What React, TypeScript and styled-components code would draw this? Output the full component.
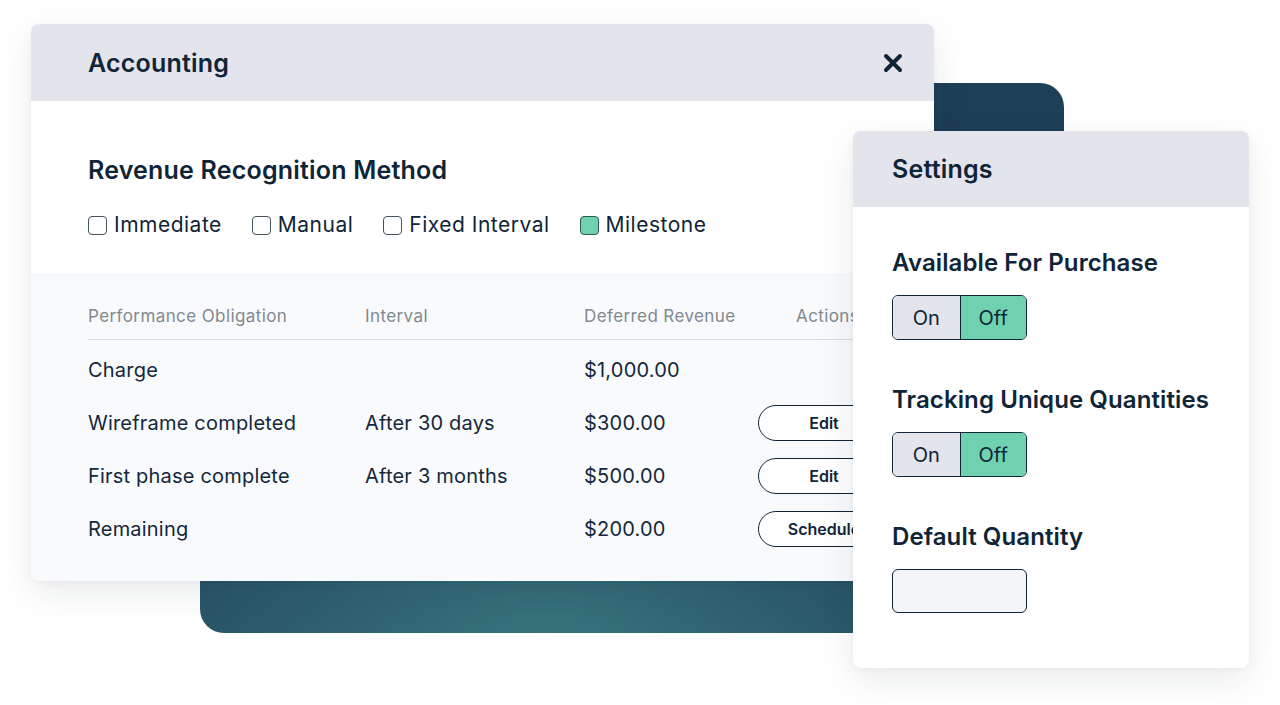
import React from 'react';
import styled, { createGlobalStyle } from 'styled-components';

const ink = '#0f2537';
const font = `Inter, "Noto Sans", "Liberation Sans", sans-serif`;

const GlobalStyle = createGlobalStyle`
  html, body {
    margin: 0;
    padding: 0;
    background: #ffffff;
  }
  body {
    font-family: ${font};
    color: ${ink};
  }
  * { box-sizing: border-box; }
`;

const Stage = styled.div`
  position: relative;
  width: 1280px;
  height: 705px;
  overflow: hidden;
  background: #fff;
`;

const Backdrop = styled.div`
  position: absolute;
  left: 200px;
  top: 83px;
  width: 864px;
  height: 550px;
  border-radius: 24px;
  background: radial-gradient(ellipse 70% 60% at 40% 100%, #38737c 0%, #2c5c6b 45%, #1e3f58 100%);
`;

const Card = styled.section<{ $left: number; $top: number; $width: number; $height: number }>`
  position: absolute;
  left: ${p => p.$left}px;
  top: ${p => p.$top}px;
  width: ${p => p.$width}px;
  height: ${p => p.$height}px;
  border-radius: 8px;
  overflow: hidden;
  background: #fff;
  box-shadow: 0 12px 36px rgba(20, 35, 50, 0.09), 0 2px 6px rgba(20, 35, 50, 0.04);
  display: flex;
  flex-direction: column;
`;

const CardHeader = styled.header<{ $height: number; $pad: number }>`
  flex: none;
  height: ${p => p.$height}px;
  padding: 0 30px 0 ${p => p.$pad}px;
  background: #e3e4ec;
  display: flex;
  align-items: center;
  justify-content: space-between;
`;

const CardTitle = styled.h1`
  margin: 0;
  font-size: 25px;
  font-weight: 600;
  letter-spacing: 0.2px;
  color: ${ink};
`;

const CloseButton = styled.button`
  border: 0;
  background: none;
  padding: 0;
  width: 22px;
  height: 22px;
  display: flex;
  color: ${ink};
`;

const MethodSection = styled.div`
  flex: none;
  height: 172px;
  padding: 54px 57px 0;
  display: flex;
  flex-direction: column;
  gap: 27px;
`;

const SectionTitle = styled.h2`
  margin: 0;
  font-size: 25px;
  line-height: 30px;
  font-weight: 600;
  letter-spacing: 0.2px;
  color: ${ink};
`;

const CheckRow = styled.div`
  display: flex;
  align-items: center;
  gap: 30px;
`;

const CheckOption = styled.label`
  display: flex;
  align-items: center;
  gap: 7px;
  font-size: 21px;
  line-height: 26px;
  letter-spacing: 0.5px;
  color: ${ink};
`;

const Box = styled.span<{ $checked?: boolean }>`
  width: 19px;
  height: 19px;
  border-radius: 4px;
  border: 1.5px solid ${p => (p.$checked ? '#2f5a55' : '#45535d')};
  background: ${p => (p.$checked ? '#6fd1b0' : '#fff')};
`;

const TableArea = styled.div`
  flex: 1;
  background: #f9fafc;
  padding: 30px 57px 0;
`;

const Grid = styled.div`
  display: grid;
  grid-template-columns: 277px 219px 174px 1fr;
  align-items: center;
`;

const HeadRow = styled(Grid)`
  height: 37px;
  padding-bottom: 11px;
  border-bottom: 1px solid #d6d9dd;
  margin-bottom: 3px;
`;

const HeadCell = styled.div<{ $indent?: number }>`
  padding-left: ${p => p.$indent ?? 0}px;
  font-size: 17px;
  line-height: 26px;
  letter-spacing: 0.4px;
  color: #80898f;
  white-space: nowrap;
`;

const BodyRow = styled(Grid)`
  height: 53px;
`;

const Cell = styled.div`
  font-size: 20px;
  letter-spacing: 0.2px;
  color: #13283a;
  white-space: nowrap;
`;

const PillButton = styled.button`
  width: 132px;
  height: 36px;
  border-radius: 18px;
  border: 1.5px solid ${ink};
  background: #fff;
  font-family: ${font};
  font-size: 16px;
  font-weight: 600;
  color: ${ink};
  padding: 0;
`;

const SettingsBody = styled.div`
  flex: 1;
  padding: 41px 39px 0;
  display: flex;
  flex-direction: column;
  gap: 45px;
`;

const Field = styled.div`
  display: flex;
  flex-direction: column;
  gap: 17px;
`;

const FieldLabel = styled.div`
  font-size: 24px;
  line-height: 30px;
  font-weight: 600;
  letter-spacing: 0.1px;
  color: ${ink};
`;

const Toggle = styled.div`
  width: 135px;
  height: 45px;
  border: 1.5px solid ${ink};
  border-radius: 6px;
  overflow: hidden;
  display: grid;
  grid-template-columns: 1fr 1fr;
`;

const ToggleHalf = styled.span<{ $active?: boolean }>`
  display: flex;
  align-items: center;
  justify-content: center;
  font-size: 20px;
  color: ${ink};
  background: ${p => (p.$active ? '#6fd1b0' : '#e3e4ec')};
  & + & {
    border-left: 1.5px solid ${ink};
  }
`;

const QtyInput = styled.div`
  width: 135px;
  height: 44px;
  border: 1.5px solid ${ink};
  border-radius: 6px;
  background: #f4f5f9;
`;

const methods = [
  { label: 'Immediate', checked: false },
  { label: 'Manual', checked: false },
  { label: 'Fixed Interval', checked: false },
  { label: 'Milestone', checked: true },
];

const rows = [
  { name: 'Charge', interval: '', amount: '$1,000.00', action: '' },
  { name: 'Wireframe completed', interval: 'After 30 days', amount: '$300.00', action: 'Edit' },
  { name: 'First phase complete', interval: 'After 3 months', amount: '$500.00', action: 'Edit' },
  { name: 'Remaining', interval: '', amount: '$200.00', action: 'Schedule' },
];

const settings = ['Available For Purchase', 'Tracking Unique Quantities'];

export default function App() {
  return (
    <Stage>
      <GlobalStyle />
      <Backdrop />

      <Card $left={31} $top={24} $width={903} $height={557}>
        <CardHeader $height={77} $pad={57}>
          <CardTitle>Accounting</CardTitle>
          <CloseButton aria-label="Close">
            <svg width="22" height="22" viewBox="0 0 22 22">
              <path d="M4 4 L18 18 M18 4 L4 18" stroke="currentColor" strokeWidth="4" strokeLinecap="round" />
            </svg>
          </CloseButton>
        </CardHeader>

        <MethodSection>
          <SectionTitle>Revenue Recognition Method</SectionTitle>
          <CheckRow>
            {methods.map(m => (
              <CheckOption key={m.label}>
                <Box $checked={m.checked} />
                {m.label}
              </CheckOption>
            ))}
          </CheckRow>
        </MethodSection>

        <TableArea>
          <HeadRow>
            <HeadCell>Performance Obligation</HeadCell>
            <HeadCell>Interval</HeadCell>
            <HeadCell>Deferred Revenue</HeadCell>
            <HeadCell $indent={38}>Actions</HeadCell>
          </HeadRow>
          {rows.map(r => (
            <BodyRow key={r.name}>
              <Cell>{r.name}</Cell>
              <Cell>{r.interval}</Cell>
              <Cell>{r.amount}</Cell>
              <div>{r.action && <PillButton>{r.action}</PillButton>}</div>
            </BodyRow>
          ))}
        </TableArea>
      </Card>

      <Card $left={853} $top={131} $width={396} $height={537}>
        <CardHeader $height={76} $pad={39}>
          <CardTitle>Settings</CardTitle>
        </CardHeader>
        <SettingsBody>
          {settings.map(s => (
            <Field key={s}>
              <FieldLabel>{s}</FieldLabel>
              <Toggle>
                <ToggleHalf>On</ToggleHalf>
                <ToggleHalf $active>Off</ToggleHalf>
              </Toggle>
            </Field>
          ))}
          <Field>
            <FieldLabel>Default Quantity</FieldLabel>
            <QtyInput />
          </Field>
        </SettingsBody>
      </Card>
    </Stage>
  );
}
